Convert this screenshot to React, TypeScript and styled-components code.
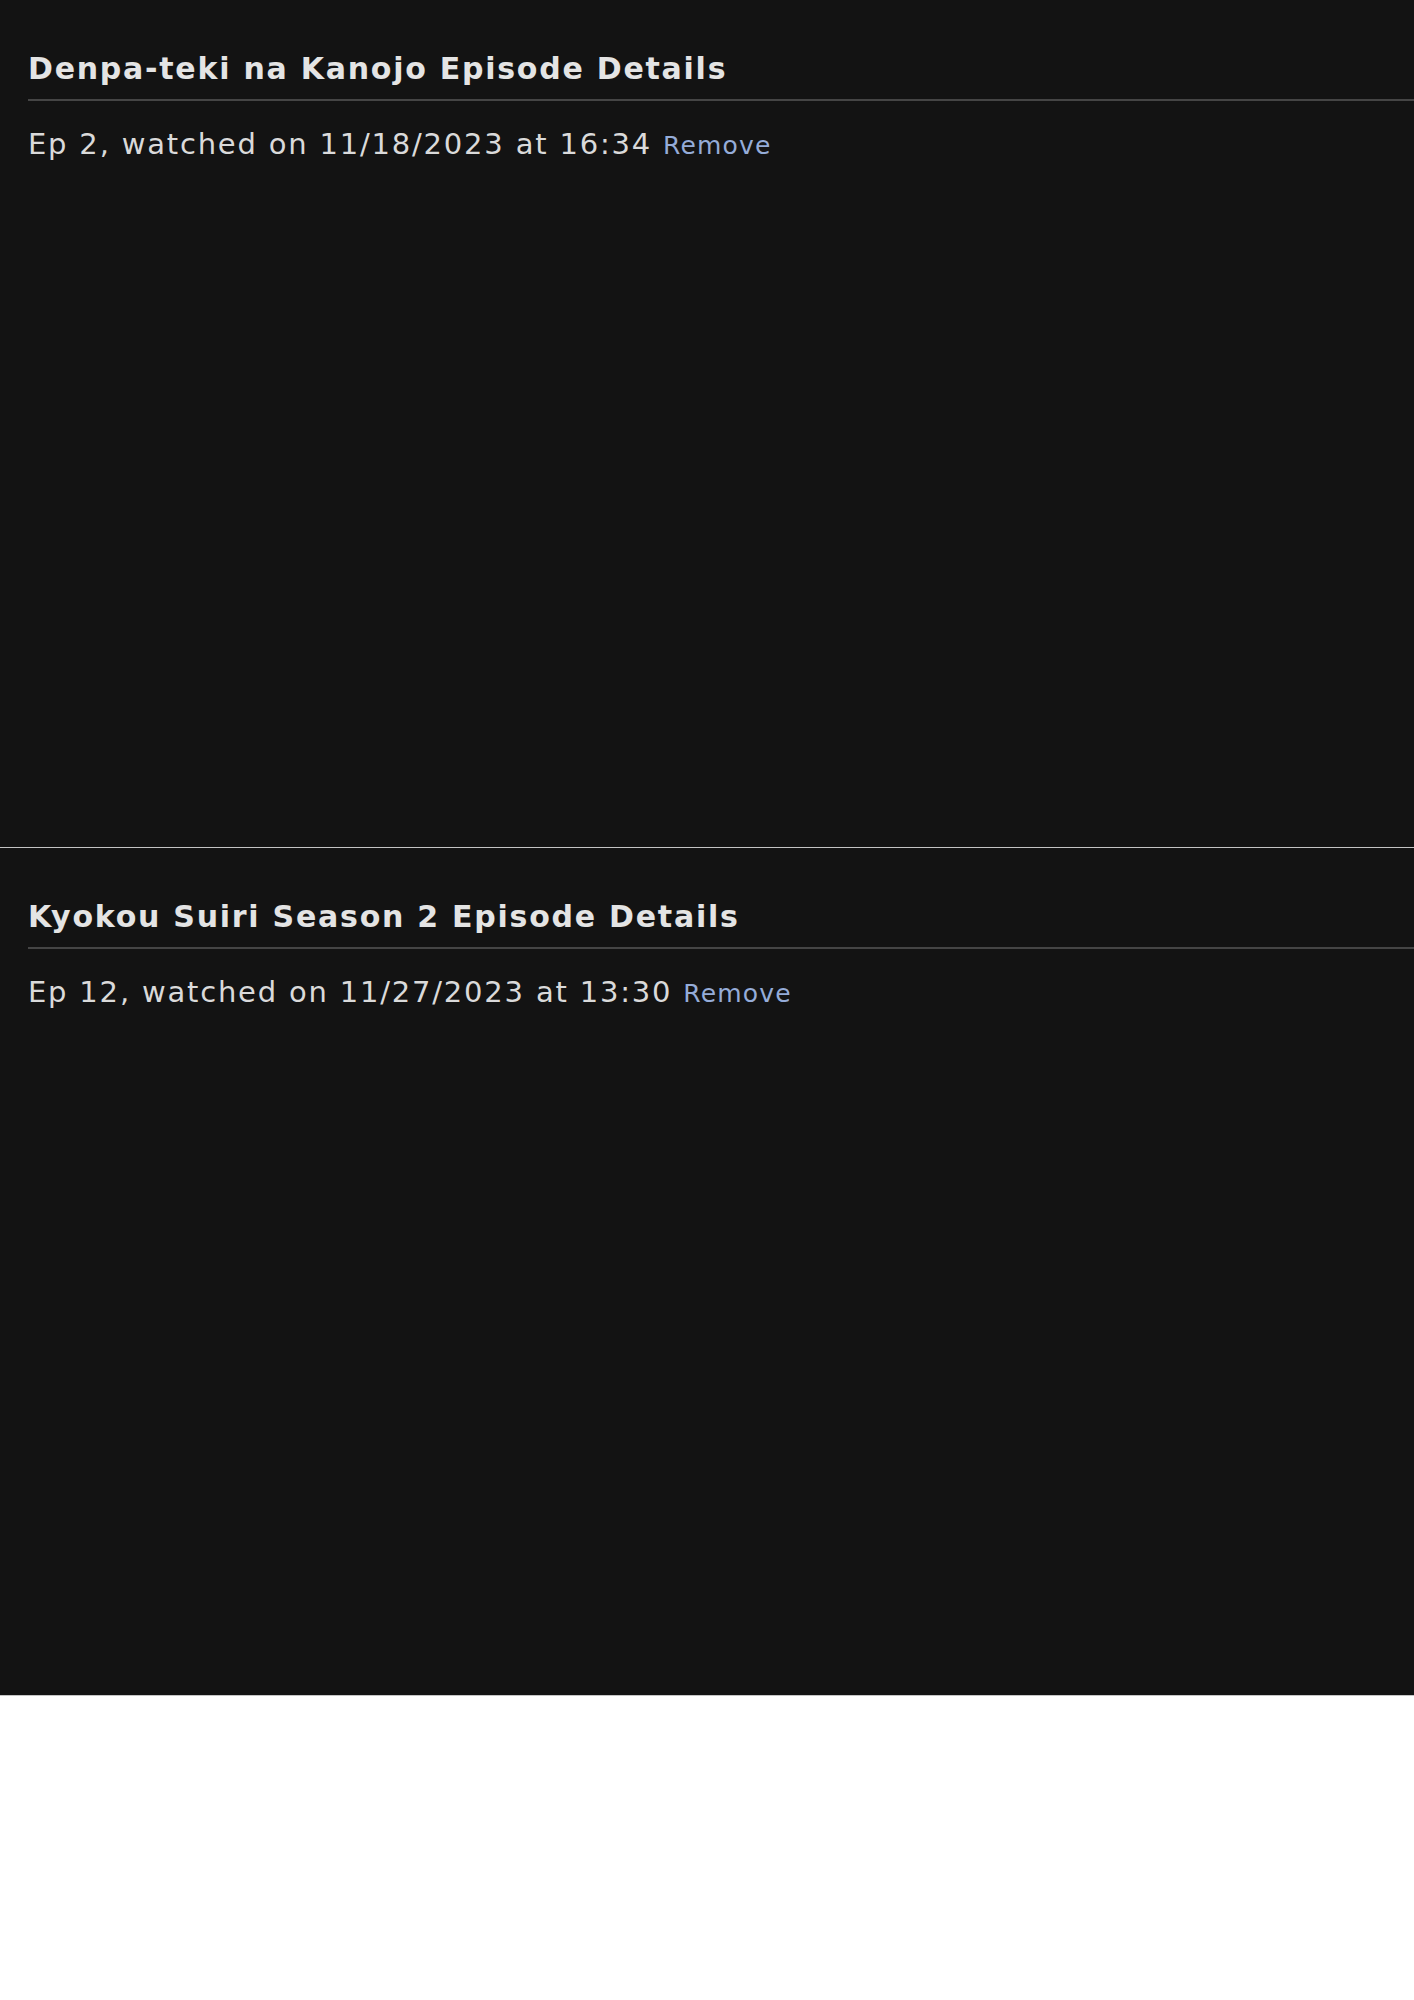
import React from 'react';
import styled, { createGlobalStyle } from 'styled-components';

interface IWatchEntry {
  title: string;
  episode: number;
  date: string;
  time: string;
}

const entries: IWatchEntry[] = [
  { title: 'Denpa-teki na Kanojo', episode: 2, date: '11/18/2023', time: '16:34' },
  { title: 'Kyokou Suiri Season 2', episode: 12, date: '11/27/2023', time: '13:30' },
];

const GlobalStyle = createGlobalStyle`
  html, body {
    margin: 0;
    padding: 0;
    background: #ffffff;
  }
  body {
    font-family: 'DejaVu Sans', Verdana, sans-serif;
  }
`;

const Panel = styled.section`
  box-sizing: content-box;
  height: 796px;
  padding: 51px 0 0 28px;
  background: #131313;
  border-bottom: 1px solid #c4c4c4;
`;

const Heading = styled.h2`
  margin: 0;
  padding-bottom: 13px;
  border-bottom: 2px solid #454545;
  color: #e4e4e4;
  font-size: 30px;
  font-weight: 700;
  letter-spacing: 1.75px;
  line-height: normal;
`;

const DetailLine = styled.p`
  margin: 26px 0 0;
  color: #dadada;
  font-size: 29px;
  letter-spacing: 1.8px;
  line-height: normal;
`;

const RemoveLink = styled.a`
  color: #95acd8;
  font-size: 25px;
  letter-spacing: 1.2px;
  text-decoration: none;
  cursor: pointer;
`;

const EpisodePanel: React.FC<{ entry: IWatchEntry }> = ({ entry }) => (
  <Panel>
    <Heading>{entry.title} Episode Details</Heading>
    <DetailLine>
      Ep {entry.episode}, watched on {entry.date} at {entry.time}{' '}
      <RemoveLink>Remove</RemoveLink>
    </DetailLine>
  </Panel>
);

export default function App() {
  return (
    <>
      <GlobalStyle />
      {entries.map((entry) => (
        <EpisodePanel key={entry.title} entry={entry} />
      ))}
    </>
  );
}
